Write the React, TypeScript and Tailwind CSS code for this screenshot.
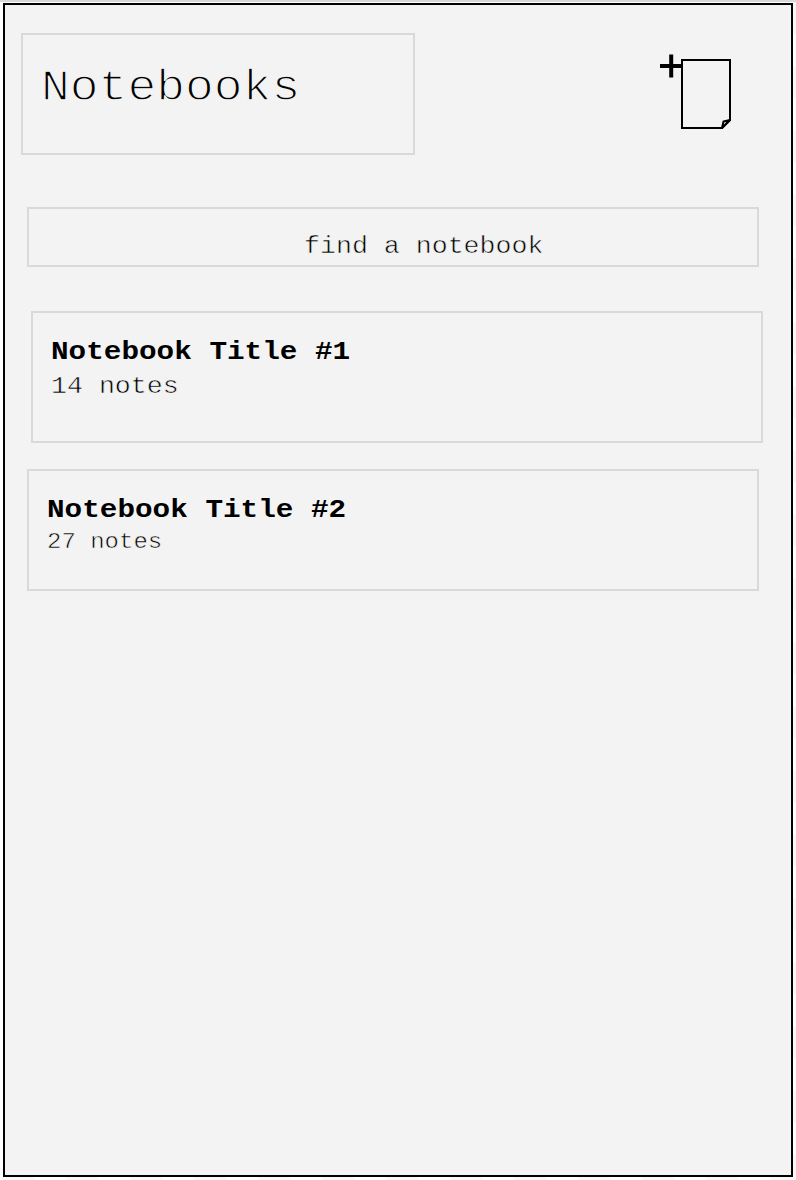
type Notebook = { title: string; notes: string; box: string; notesClass: string };

const notebooks: Notebook[] = [
  {
    title: 'Notebook Title #1',
    notes: '14 notes',
    box: 'ml-[26px] mt-11 h-[132px]',
    notesClass: 'text-[26.6px] leading-[36px]',
  },
  {
    title: 'Notebook Title #2',
    notes: '27 notes',
    box: 'ml-[22px] mt-[26px] h-[122px]',
    notesClass: 'text-[24px] leading-[32px]',
  },
];

function NewNoteIcon() {
  return (
    <svg width="74" height="78" viewBox="0 0 74 78" fill="none" stroke="#000">
      <path d="M0 12H22" strokeWidth="4" />
      <path d="M11.2 0.5V23.5" strokeWidth="4" />
      <path d="M22 6H70V66L62 74H22Z" strokeWidth="2" />
      <path d="M62 74L63.5 67.5L70 66Z" strokeWidth="2" strokeLinejoin="round" />
    </svg>
  );
}

export default function App() {
  return (
    <div className="flex h-[1180px] w-[796px] flex-col overflow-hidden bg-white font-['Liberation_Mono','Courier_New',monospace] text-black">
      <div className="h-[2px] shrink-0 bg-[#d8d8d8]" />
      <div className="flex h-[1175px] shrink-0">
        <main className="ml-[3px] mt-px h-[1174px] w-[790px] shrink-0 border-2 border-black bg-[#f3f3f3]">
          <header className="flex pt-7 pl-4">
            <div className="h-[122px] w-[394px] border-2 border-[#d9d9d9] pt-[25px] pl-[18px]">
              <h1 className="origin-[0_78%] scale-y-[0.91] text-[48px] leading-[54px] font-normal [-webkit-text-stroke:1.5px_#f3f3f3]">Notebooks</h1>
            </div>
            <button aria-label="New notebook" className="mt-[21px] ml-[245px] h-[78px] w-[74px]">
              <NewNoteIcon />
            </button>
          </header>
          <div className="mt-[52px] ml-[22px] flex h-[60px] w-[732px] border-2 border-[#d9d9d9] pt-[21px] pl-[275px]">
            <span className="origin-[0_76%] scale-y-[0.93] text-[26.6px] leading-[32px] whitespace-pre [-webkit-text-stroke:0.6px_#f3f3f3]">find a notebook</span>
          </div>
          {notebooks.map((n) => (
            <section key={n.title} className={`w-[732px] border-2 border-[#d9d9d9] pt-[22px] pl-[18px] ${n.box}`}>
              <h2 className="origin-[0_76%] scale-y-[0.87] text-[29.33px] leading-[33px] font-bold">{n.title}</h2>
              <p className={`origin-[0_76%] scale-y-[0.93] [-webkit-text-stroke:0.6px_#f3f3f3] ${n.notesClass}`}>{n.notes}</p>
            </section>
          ))}
        </main>
        <div className="w-[3px] bg-[repeating-linear-gradient(to_bottom,#f8f8f8_0px,#f8f8f8_32px,#ffffff_32px,#ffffff_64px)]" />
      </div>
      <div className="ml-[2px] h-[3px] shrink-0 bg-[repeating-linear-gradient(to_right,#f8f8f8_0px,#f8f8f8_32px,#ffffff_32px,#ffffff_64px)]" />
    </div>
  );
}
